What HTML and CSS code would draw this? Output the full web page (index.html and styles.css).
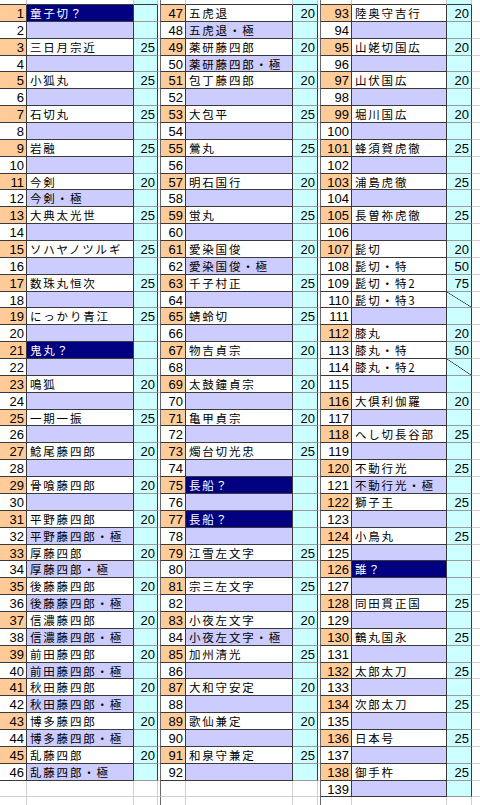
FILE: index.html
```html
<!DOCTYPE html>
<html lang="ja">
<head>
<meta charset="utf-8">
<title>刀剣一覧</title>
<link rel="stylesheet" href="styles.css">
</head>
<body>
<div class="sheet">
  <div class="grp g1">
    <div class="top"><span class="n"></span><span class="t"></span><span class="v"></span><span class="g"></span></div>
    <div class="r"><span class="n o">1</span><span class="t q">童子切？</span><span class="v"></span><span class="g"></span></div>
    <div class="r"><span class="n">2</span><span class="t l"></span><span class="v"></span><span class="g"></span></div>
    <div class="r"><span class="n o">3</span><span class="t">三日月宗近</span><span class="v">25</span><span class="g"></span></div>
    <div class="r"><span class="n">4</span><span class="t l"></span><span class="v"></span><span class="g"></span></div>
    <div class="r"><span class="n o">5</span><span class="t">小狐丸</span><span class="v">25</span><span class="g"></span></div>
    <div class="r"><span class="n">6</span><span class="t l"></span><span class="v"></span><span class="g"></span></div>
    <div class="r"><span class="n o">7</span><span class="t">石切丸</span><span class="v">25</span><span class="g"></span></div>
    <div class="r"><span class="n">8</span><span class="t l"></span><span class="v"></span><span class="g"></span></div>
    <div class="r"><span class="n o">9</span><span class="t">岩融</span><span class="v">25</span><span class="g"></span></div>
    <div class="r"><span class="n">10</span><span class="t l"></span><span class="v"></span><span class="g"></span></div>
    <div class="r"><span class="n o">11</span><span class="t">今剣</span><span class="v">20</span><span class="g"></span></div>
    <div class="r"><span class="n">12</span><span class="t l">今剣・極</span><span class="v"></span><span class="g"></span></div>
    <div class="r"><span class="n o">13</span><span class="t">大典太光世</span><span class="v">25</span><span class="g"></span></div>
    <div class="r"><span class="n">14</span><span class="t l"></span><span class="v"></span><span class="g"></span></div>
    <div class="r"><span class="n o">15</span><span class="t">ソハヤノツルギ</span><span class="v">25</span><span class="g"></span></div>
    <div class="r"><span class="n">16</span><span class="t l"></span><span class="v"></span><span class="g"></span></div>
    <div class="r"><span class="n o">17</span><span class="t">数珠丸恒次</span><span class="v">25</span><span class="g"></span></div>
    <div class="r"><span class="n">18</span><span class="t l"></span><span class="v"></span><span class="g"></span></div>
    <div class="r"><span class="n o">19</span><span class="t">にっかり青江</span><span class="v">25</span><span class="g"></span></div>
    <div class="r"><span class="n">20</span><span class="t l"></span><span class="v"></span><span class="g"></span></div>
    <div class="r"><span class="n o">21</span><span class="t q">鬼丸？</span><span class="v"></span><span class="g"></span></div>
    <div class="r"><span class="n">22</span><span class="t l"></span><span class="v"></span><span class="g"></span></div>
    <div class="r"><span class="n o">23</span><span class="t">鳴狐</span><span class="v">20</span><span class="g"></span></div>
    <div class="r"><span class="n">24</span><span class="t l"></span><span class="v"></span><span class="g"></span></div>
    <div class="r"><span class="n o">25</span><span class="t">一期一振</span><span class="v">25</span><span class="g"></span></div>
    <div class="r"><span class="n">26</span><span class="t l"></span><span class="v"></span><span class="g"></span></div>
    <div class="r"><span class="n o">27</span><span class="t">鯰尾藤四郎</span><span class="v">20</span><span class="g"></span></div>
    <div class="r"><span class="n">28</span><span class="t l"></span><span class="v"></span><span class="g"></span></div>
    <div class="r"><span class="n o">29</span><span class="t">骨喰藤四郎</span><span class="v">20</span><span class="g"></span></div>
    <div class="r"><span class="n">30</span><span class="t l"></span><span class="v"></span><span class="g"></span></div>
    <div class="r"><span class="n o">31</span><span class="t">平野藤四郎</span><span class="v">20</span><span class="g"></span></div>
    <div class="r"><span class="n">32</span><span class="t l">平野藤四郎・極</span><span class="v"></span><span class="g"></span></div>
    <div class="r"><span class="n o">33</span><span class="t">厚藤四郎</span><span class="v">20</span><span class="g"></span></div>
    <div class="r"><span class="n">34</span><span class="t l">厚藤四郎・極</span><span class="v"></span><span class="g"></span></div>
    <div class="r"><span class="n o">35</span><span class="t">後藤藤四郎</span><span class="v">20</span><span class="g"></span></div>
    <div class="r"><span class="n">36</span><span class="t l">後藤藤四郎・極</span><span class="v"></span><span class="g"></span></div>
    <div class="r"><span class="n o">37</span><span class="t">信濃藤四郎</span><span class="v">20</span><span class="g"></span></div>
    <div class="r"><span class="n">38</span><span class="t l">信濃藤四郎・極</span><span class="v"></span><span class="g"></span></div>
    <div class="r"><span class="n o">39</span><span class="t">前田藤四郎</span><span class="v">20</span><span class="g"></span></div>
    <div class="r"><span class="n">40</span><span class="t l">前田藤四郎・極</span><span class="v"></span><span class="g"></span></div>
    <div class="r"><span class="n o">41</span><span class="t">秋田藤四郎</span><span class="v">20</span><span class="g"></span></div>
    <div class="r"><span class="n">42</span><span class="t l">秋田藤四郎・極</span><span class="v"></span><span class="g"></span></div>
    <div class="r"><span class="n o">43</span><span class="t">博多藤四郎</span><span class="v">20</span><span class="g"></span></div>
    <div class="r"><span class="n">44</span><span class="t l">博多藤四郎・極</span><span class="v"></span><span class="g"></span></div>
    <div class="r"><span class="n o">45</span><span class="t">乱藤四郎</span><span class="v">20</span><span class="g"></span></div>
    <div class="r"><span class="n">46</span><span class="t l">乱藤四郎・極</span><span class="v"></span><span class="g"></span></div>
    <div class="r e"><span class="n"></span><span class="t"></span><span class="v"></span><span class="g"></span></div>
    <div class="r e"><span class="n"></span><span class="t"></span><span class="v"></span><span class="g"></span></div>
  </div>
  <div class="grp g2">
    <div class="top"><span class="n"></span><span class="t"></span><span class="v"></span><span class="g"></span></div>
    <div class="r"><span class="n o">47</span><span class="t">五虎退</span><span class="v">20</span><span class="g"></span></div>
    <div class="r"><span class="n">48</span><span class="t l">五虎退・極</span><span class="v"></span><span class="g"></span></div>
    <div class="r"><span class="n o">49</span><span class="t">薬研藤四郎</span><span class="v">20</span><span class="g"></span></div>
    <div class="r"><span class="n">50</span><span class="t l">薬研藤四郎・極</span><span class="v"></span><span class="g"></span></div>
    <div class="r"><span class="n o">51</span><span class="t">包丁藤四郎</span><span class="v">20</span><span class="g"></span></div>
    <div class="r"><span class="n">52</span><span class="t l"></span><span class="v"></span><span class="g"></span></div>
    <div class="r"><span class="n o">53</span><span class="t">大包平</span><span class="v">25</span><span class="g"></span></div>
    <div class="r"><span class="n">54</span><span class="t l"></span><span class="v"></span><span class="g"></span></div>
    <div class="r"><span class="n o">55</span><span class="t">鶯丸</span><span class="v">25</span><span class="g"></span></div>
    <div class="r"><span class="n">56</span><span class="t l"></span><span class="v"></span><span class="g"></span></div>
    <div class="r"><span class="n o">57</span><span class="t">明石国行</span><span class="v">20</span><span class="g"></span></div>
    <div class="r"><span class="n">58</span><span class="t l"></span><span class="v"></span><span class="g"></span></div>
    <div class="r"><span class="n o">59</span><span class="t">蛍丸</span><span class="v">25</span><span class="g"></span></div>
    <div class="r"><span class="n">60</span><span class="t l"></span><span class="v"></span><span class="g"></span></div>
    <div class="r"><span class="n o">61</span><span class="t">愛染国俊</span><span class="v">20</span><span class="g"></span></div>
    <div class="r"><span class="n">62</span><span class="t l">愛染国俊・極</span><span class="v"></span><span class="g"></span></div>
    <div class="r"><span class="n o">63</span><span class="t">千子村正</span><span class="v">25</span><span class="g"></span></div>
    <div class="r"><span class="n">64</span><span class="t l"></span><span class="v"></span><span class="g"></span></div>
    <div class="r"><span class="n o">65</span><span class="t">蜻蛉切</span><span class="v">25</span><span class="g"></span></div>
    <div class="r"><span class="n">66</span><span class="t l"></span><span class="v"></span><span class="g"></span></div>
    <div class="r"><span class="n o">67</span><span class="t">物吉貞宗</span><span class="v">20</span><span class="g"></span></div>
    <div class="r"><span class="n">68</span><span class="t l"></span><span class="v"></span><span class="g"></span></div>
    <div class="r"><span class="n o">69</span><span class="t">太鼓鐘貞宗</span><span class="v">20</span><span class="g"></span></div>
    <div class="r"><span class="n">70</span><span class="t l"></span><span class="v"></span><span class="g"></span></div>
    <div class="r"><span class="n o">71</span><span class="t">亀甲貞宗</span><span class="v">20</span><span class="g"></span></div>
    <div class="r"><span class="n">72</span><span class="t l"></span><span class="v"></span><span class="g"></span></div>
    <div class="r"><span class="n o">73</span><span class="t">燭台切光忠</span><span class="v">25</span><span class="g"></span></div>
    <div class="r"><span class="n">74</span><span class="t l"></span><span class="v"></span><span class="g"></span></div>
    <div class="r"><span class="n o">75</span><span class="t q">長船？</span><span class="v"></span><span class="g"></span></div>
    <div class="r"><span class="n">76</span><span class="t l"></span><span class="v"></span><span class="g"></span></div>
    <div class="r"><span class="n o">77</span><span class="t q">長船？</span><span class="v"></span><span class="g"></span></div>
    <div class="r"><span class="n">78</span><span class="t l"></span><span class="v"></span><span class="g"></span></div>
    <div class="r"><span class="n o">79</span><span class="t">江雪左文字</span><span class="v">25</span><span class="g"></span></div>
    <div class="r"><span class="n">80</span><span class="t l"></span><span class="v"></span><span class="g"></span></div>
    <div class="r"><span class="n o">81</span><span class="t">宗三左文字</span><span class="v">25</span><span class="g"></span></div>
    <div class="r"><span class="n">82</span><span class="t l"></span><span class="v"></span><span class="g"></span></div>
    <div class="r"><span class="n o">83</span><span class="t">小夜左文字</span><span class="v">20</span><span class="g"></span></div>
    <div class="r"><span class="n">84</span><span class="t l">小夜左文字・極</span><span class="v"></span><span class="g"></span></div>
    <div class="r"><span class="n o">85</span><span class="t">加州清光</span><span class="v">25</span><span class="g"></span></div>
    <div class="r"><span class="n">86</span><span class="t l"></span><span class="v"></span><span class="g"></span></div>
    <div class="r"><span class="n o">87</span><span class="t">大和守安定</span><span class="v">20</span><span class="g"></span></div>
    <div class="r"><span class="n">88</span><span class="t l"></span><span class="v"></span><span class="g"></span></div>
    <div class="r"><span class="n o">89</span><span class="t">歌仙兼定</span><span class="v">20</span><span class="g"></span></div>
    <div class="r"><span class="n">90</span><span class="t l"></span><span class="v"></span><span class="g"></span></div>
    <div class="r"><span class="n o">91</span><span class="t">和泉守兼定</span><span class="v">25</span><span class="g"></span></div>
    <div class="r"><span class="n">92</span><span class="t l"></span><span class="v"></span><span class="g"></span></div>
    <div class="r e"><span class="n"></span><span class="t"></span><span class="v"></span><span class="g"></span></div>
    <div class="r e"><span class="n"></span><span class="t"></span><span class="v"></span><span class="g"></span></div>
  </div>
  <div class="grp g3">
    <div class="top"><span class="n"></span><span class="t"></span><span class="v"></span><span class="g"></span></div>
    <div class="r"><span class="n o">93</span><span class="t">陸奥守吉行</span><span class="v">20</span><span class="g"></span></div>
    <div class="r"><span class="n">94</span><span class="t l"></span><span class="v"></span><span class="g"></span></div>
    <div class="r"><span class="n o">95</span><span class="t">山姥切国広</span><span class="v">20</span><span class="g"></span></div>
    <div class="r"><span class="n">96</span><span class="t l"></span><span class="v"></span><span class="g"></span></div>
    <div class="r"><span class="n o">97</span><span class="t">山伏国広</span><span class="v">20</span><span class="g"></span></div>
    <div class="r"><span class="n">98</span><span class="t l"></span><span class="v"></span><span class="g"></span></div>
    <div class="r"><span class="n o">99</span><span class="t">堀川国広</span><span class="v">20</span><span class="g"></span></div>
    <div class="r"><span class="n">100</span><span class="t l"></span><span class="v"></span><span class="g"></span></div>
    <div class="r"><span class="n o">101</span><span class="t">蜂須賀虎徹</span><span class="v">25</span><span class="g"></span></div>
    <div class="r"><span class="n">102</span><span class="t l"></span><span class="v"></span><span class="g"></span></div>
    <div class="r"><span class="n o">103</span><span class="t">浦島虎徹</span><span class="v">25</span><span class="g"></span></div>
    <div class="r"><span class="n">104</span><span class="t l"></span><span class="v"></span><span class="g"></span></div>
    <div class="r"><span class="n o">105</span><span class="t">長曽祢虎徹</span><span class="v">25</span><span class="g"></span></div>
    <div class="r"><span class="n">106</span><span class="t l"></span><span class="v"></span><span class="g"></span></div>
    <div class="r"><span class="n o">107</span><span class="t">髭切</span><span class="v">20</span><span class="g"></span></div>
    <div class="r"><span class="n">108</span><span class="t">髭切・特</span><span class="v">50</span><span class="g"></span></div>
    <div class="r"><span class="n">109</span><span class="t">髭切・特2</span><span class="v">75</span><span class="g"></span></div>
    <div class="r"><span class="n">110</span><span class="t">髭切・特3</span><span class="v x"></span><span class="g"></span></div>
    <div class="r"><span class="n">111</span><span class="t l"></span><span class="v"></span><span class="g"></span></div>
    <div class="r"><span class="n o">112</span><span class="t">膝丸</span><span class="v">20</span><span class="g"></span></div>
    <div class="r"><span class="n">113</span><span class="t">膝丸・特</span><span class="v">50</span><span class="g"></span></div>
    <div class="r"><span class="n">114</span><span class="t">膝丸・特2</span><span class="v x"></span><span class="g"></span></div>
    <div class="r"><span class="n">115</span><span class="t l"></span><span class="v"></span><span class="g"></span></div>
    <div class="r"><span class="n o">116</span><span class="t">大倶利伽羅</span><span class="v">20</span><span class="g"></span></div>
    <div class="r"><span class="n">117</span><span class="t l"></span><span class="v"></span><span class="g"></span></div>
    <div class="r"><span class="n o">118</span><span class="t">へし切長谷部</span><span class="v">25</span><span class="g"></span></div>
    <div class="r"><span class="n">119</span><span class="t l"></span><span class="v"></span><span class="g"></span></div>
    <div class="r"><span class="n o">120</span><span class="t">不動行光</span><span class="v">25</span><span class="g"></span></div>
    <div class="r"><span class="n">121</span><span class="t l">不動行光・極</span><span class="v"></span><span class="g"></span></div>
    <div class="r"><span class="n o">122</span><span class="t">獅子王</span><span class="v">25</span><span class="g"></span></div>
    <div class="r"><span class="n">123</span><span class="t l"></span><span class="v"></span><span class="g"></span></div>
    <div class="r"><span class="n o">124</span><span class="t">小鳥丸</span><span class="v">25</span><span class="g"></span></div>
    <div class="r"><span class="n">125</span><span class="t l"></span><span class="v"></span><span class="g"></span></div>
    <div class="r"><span class="n o">126</span><span class="t q">誰？</span><span class="v"></span><span class="g"></span></div>
    <div class="r"><span class="n">127</span><span class="t l"></span><span class="v"></span><span class="g"></span></div>
    <div class="r"><span class="n o">128</span><span class="t">同田貫正国</span><span class="v">25</span><span class="g"></span></div>
    <div class="r"><span class="n">129</span><span class="t l"></span><span class="v"></span><span class="g"></span></div>
    <div class="r"><span class="n o">130</span><span class="t">鶴丸国永</span><span class="v">25</span><span class="g"></span></div>
    <div class="r"><span class="n">131</span><span class="t l"></span><span class="v"></span><span class="g"></span></div>
    <div class="r"><span class="n o">132</span><span class="t">太郎太刀</span><span class="v">25</span><span class="g"></span></div>
    <div class="r"><span class="n">133</span><span class="t l"></span><span class="v"></span><span class="g"></span></div>
    <div class="r"><span class="n o">134</span><span class="t">次郎太刀</span><span class="v">25</span><span class="g"></span></div>
    <div class="r"><span class="n">135</span><span class="t l"></span><span class="v"></span><span class="g"></span></div>
    <div class="r"><span class="n o">136</span><span class="t">日本号</span><span class="v">25</span><span class="g"></span></div>
    <div class="r"><span class="n">137</span><span class="t l"></span><span class="v"></span><span class="g"></span></div>
    <div class="r"><span class="n o">138</span><span class="t">御手杵</span><span class="v">25</span><span class="g"></span></div>
    <div class="r"><span class="n">139</span><span class="t l"></span><span class="v"></span><span class="g"></span></div>
    <div class="r e"><span class="n"></span><span class="t"></span><span class="v"></span><span class="g"></span></div>
  </div>
</div>
</body>
</html>
```

FILE: styles.css
```css
* {
  box-sizing: border-box;
  margin: 0;
  padding: 0;
}

html, body {
  background: #ffffff;
}

body {
  margin: 0;
  width: 480px;
  height: 805px;
  overflow: hidden;
  font-family: "Noto Sans CJK JP", "Noto Sans CJK SC", sans-serif;
  color: #000000;
}

.sheet {
  display: flex;
  width: 480px;
}

.grp {
  width: 160px;
  display: flex;
  flex-direction: column;
}

.top {
  display: flex;
  height: 5px;
}

.top > span {
  height: 100%;
  border-right: 1px solid #c8c8c8;
  border-bottom: 1px solid #3a3a3a;
}

.top > .g {
  border-bottom: none;
}

.r {
  display: flex;
  height: 16.87px;
  flex: none;
}

.r > span {
  display: block;
  height: 100%;
  white-space: nowrap;
  border-right: 1px solid #3a3a3a;
  border-bottom: 1px solid #3a3a3a;
}

.n {
  flex: none;
  text-align: right;
  font-family: "Liberation Sans", Arial, sans-serif;
  font-size: 13px;
  line-height: 15px;
  padding-top: 1px;
  padding-right: 2px;
  background: #ffffff;
}

.t {
  flex: none;
  font-size: 11.5px;
  letter-spacing: 1.8px;
  line-height: 15px;
  padding-top: 1px;
  padding-left: 3px;
  background: #ffffff;
}

.v {
  flex: none;
  text-align: right;
  font-family: "Liberation Sans", Arial, sans-serif;
  font-size: 13px;
  line-height: 15px;
  padding-top: 1px;
  padding-right: 2px;
  background: #ccffff;
}

.r > .v {
  border-bottom-color: #9a9a9a;
}

.r > .g,
.top > .g {
  flex: 1;
  border-right: none;
  border-bottom-color: #d0d0d0;
  background: #ffffff;
}

.g1 .n { width: 27px; }
.g1 .t { width: 107px; }
.g1 .v { width: 24px; }

.g2 .n { width: 26px; }
.g2 .t { width: 107px; }
.g2 .v { width: 25px; }

.g3 .n { width: 32px; }
.g3 .t { width: 95px; }
.g3 .v { width: 25px; }

.g2 .n,
.g3 .n {
  border-left: 1px solid #6a6a6a;
}

.n.o {
  background: #ffcc99;
}

.t.l {
  background: #ccccff;
}

.t.q {
  background: #000080;
  color: #ffffff;
}

.v.x {
  background:
    linear-gradient(to top right, transparent calc(50% - 0.6px), #222222 50%, transparent calc(50% + 0.6px)),
    #ccffff;
}

.r.e > span {
  background: #ffffff;
  border-right-color: #d0d0d0;
  border-bottom-color: #d0d0d0;
}
```
